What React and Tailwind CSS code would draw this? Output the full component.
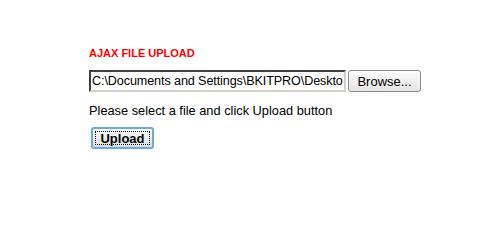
import React from 'react';

const App = () => {
    return (
        <div className="w-[500px] h-[226px] bg-white pl-[89px] pt-[47px]" style={{ fontFamily: '"Liberation Sans", Arial, sans-serif' }}>
            <h1 className="text-[11px] font-bold text-[#ff0000] leading-[13px]">AJAX FILE UPLOAD</h1>

            <div className="flex items-center mt-[10px] gap-[2px]">
                <div className="w-[257px] h-[22px] border-2 border-t-[#404040] border-l-[#404040] border-r-[#d4d0c8] border-b-[#d4d0c8] bg-white overflow-hidden flex items-center px-[1px]">
                    <span className="text-[12.6px] tracking-[-0.1px] text-black whitespace-nowrap leading-none">C:\Documents and Settings\BKITPRO\Deskto</span>
                </div>
                <button className="w-[73px] h-[22px] rounded-[3px] border border-[#8a8a8a] bg-gradient-to-b from-[#fdfdfd] to-[#e4e4e4] text-[13px] text-black leading-none">
                    Browse...
                </button>
            </div>

            <p className="text-[12.8px] text-black mt-[11px] leading-[15px]">Please select a file and click Upload button</p>

            <button className="mt-[9px] ml-[2px] w-[63px] h-[22px] rounded-[3px] border-2 border-[#6aa8e0] bg-gradient-to-b from-[#fbfbfb] to-[#dcdcdc] flex items-center justify-center p-[2px]">
                <span className="w-full h-full border border-dotted border-black flex items-center justify-center text-[13px] font-bold text-black leading-none">
                    Upload
                </span>
            </button>
        </div>
    );
};

export default App;
